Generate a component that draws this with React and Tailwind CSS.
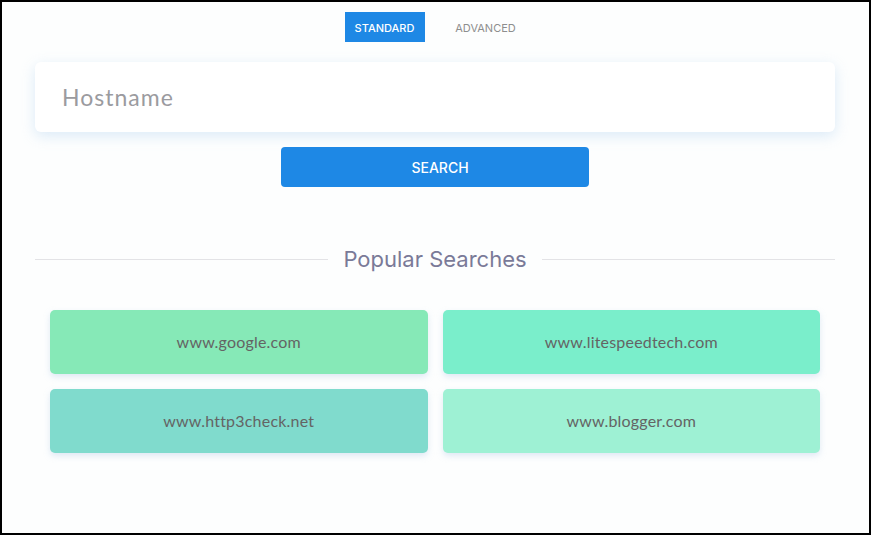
export default function App() {
  const items = [
    { name: "www.google.com", bg: "bg-[#86e9b7]" },
    { name: "www.litespeedtech.com", bg: "bg-[#7aeecb]" },
    { name: "www.http3check.net", bg: "bg-[#80dbcd]" },
    { name: "www.blogger.com", bg: "bg-[#9ef1d4]" },
  ];
  return (
    <div className="w-[871px] h-[535px] border-2 border-black bg-[#fdfefe] font-['Inter',sans-serif] overflow-hidden">
      <div className="w-[800px] ml-[33px] flex flex-col items-stretch">
        <div className="flex justify-center items-center mt-[10px] h-[30px]">
          <div className="w-[80px] h-[30px] pt-[2px] bg-[#1e88e5] text-white text-[11px] font-medium flex items-center justify-center">
            STANDARD
          </div>
          <div className="w-[80px] h-[30px] pt-[2px] text-[#8e8e8e] text-[11px] flex items-center justify-center ml-[21px]">
            ADVANCED
          </div>
        </div>
        <div className="mt-[20px] h-[70px] bg-white rounded-md shadow-[0_4px_14px_rgba(180,210,240,0.45)] flex items-center px-[27px]">
          <span className="text-[23px] text-[#9b9b9f] font-['Lato',sans-serif] tracking-[1px]">Hostname</span>
        </div>
        <div className="flex justify-center mt-[15px]">
          <button className="w-[308px] h-[40px] rounded-[4px] bg-[#1e88e5] text-white text-[14px] font-medium pl-[10px]">
            SEARCH
          </button>
        </div>
        <div className="flex items-center mt-[57px] h-[30px]">
          <div className="flex-1 h-px bg-[#e3e3e6]"></div>
          <div className="px-[15px] text-[22px] text-[#7a7a98]">Popular Searches</div>
          <div className="flex-1 h-px bg-[#e3e3e6]"></div>
        </div>
        <div className="grid grid-cols-2 gap-[15px] px-[15px] mt-[36px]">
          {items.map((it) => (
            <div
              key={it.name}
              className={`${it.bg} h-[64px] rounded-[5px] shadow-[0_3px_6px_rgba(170,195,225,0.35)] flex items-center justify-center text-[16px] text-[#646464] font-['Lato',sans-serif] tracking-[0.2px]`}
            >
              {it.name}
            </div>
          ))}
        </div>
      </div>
    </div>
  );
}
